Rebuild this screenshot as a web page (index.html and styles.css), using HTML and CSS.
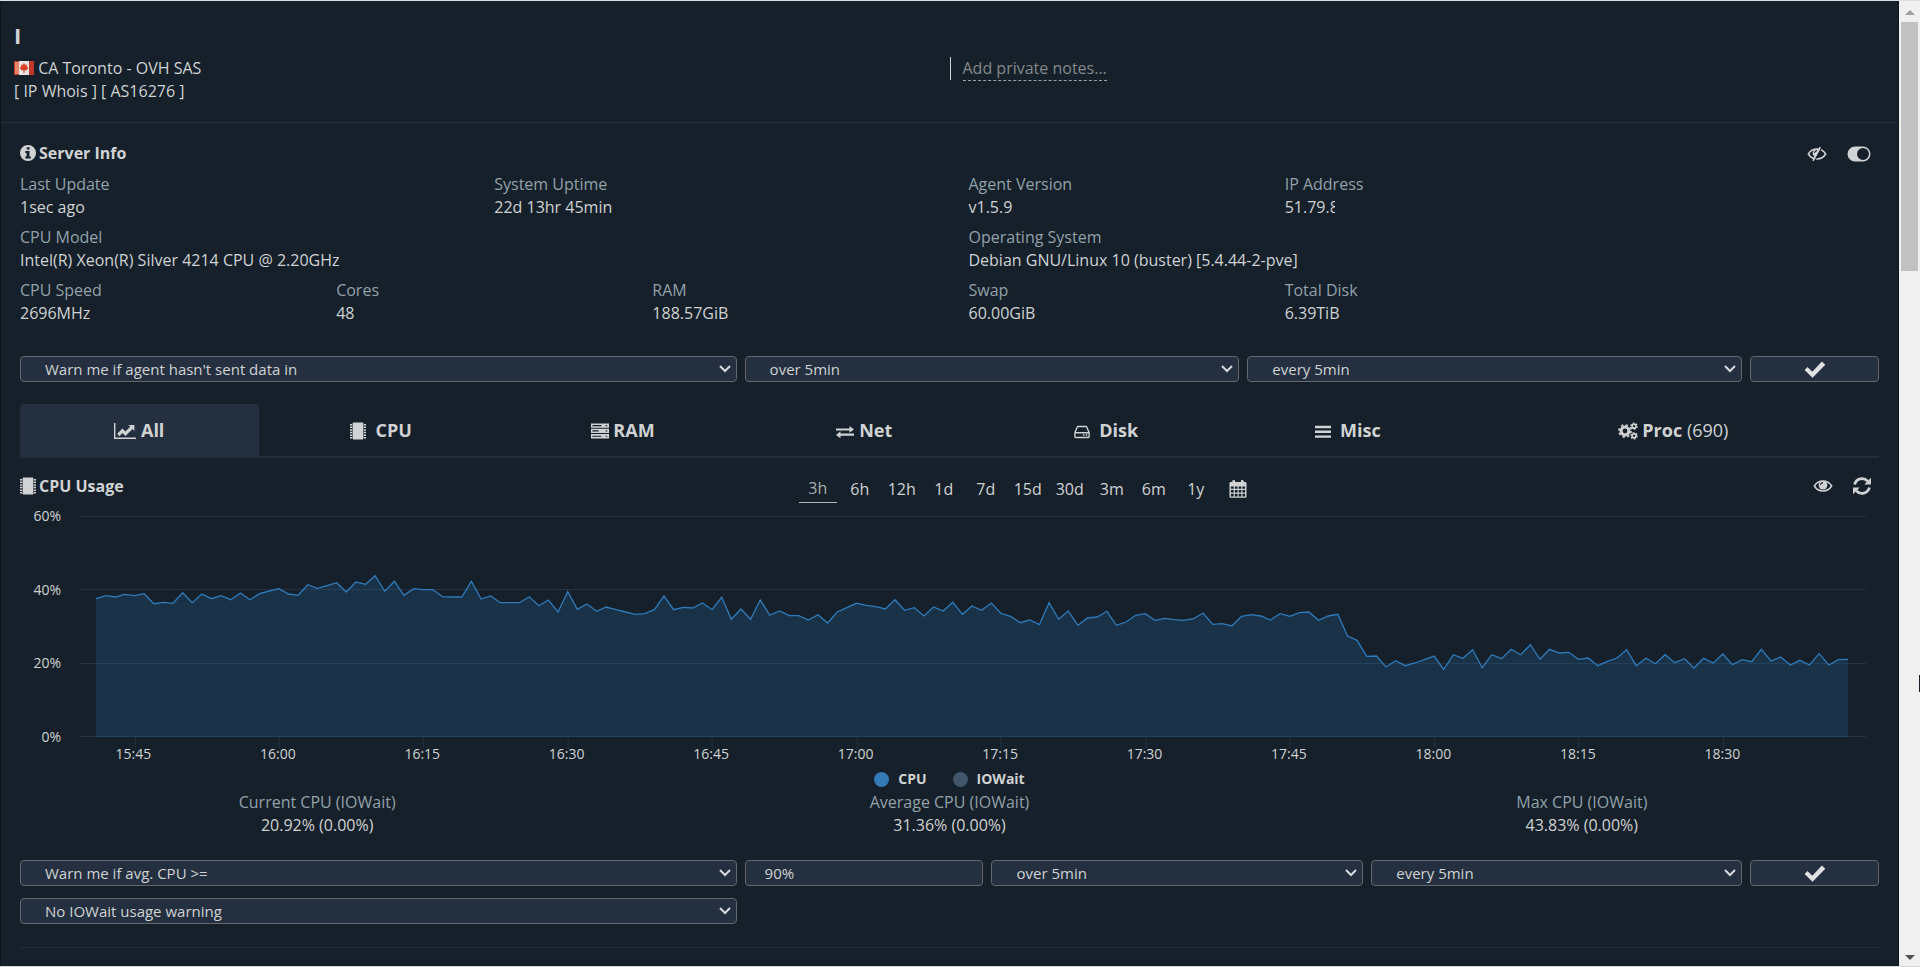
FILE: index.html
```html
<!DOCTYPE html>
<html lang="en">
<head>
<meta charset="utf-8">
<title>Server monitor</title>
<link rel="stylesheet" href="styles.css">
</head>
<body>
<svg class="defs" aria-hidden="true">
  <symbol id="i-info" viewBox="0 0 16 16"><path fill-rule="evenodd" d="M8 0a8 8 0 1 0 0 16A8 8 0 0 0 8 0zM6.7 2.2h2.8v2.4H6.7zM5.3 6h4.2v5.4h1.3v2H5.3v-2h1.3V8H5.3z"/></symbol>
  <symbol id="i-eye" viewBox="0 0 22 16"><path class="line" d="M1.5 8C6 .7 16 .7 20.500 8 16 15.300 6 15.300 1.500 8z"/><circle cx="11" cy="7" r="4.800"/><path class="cut" d="M8.300 7a2.700 2.700 0 0 1 2.700-2.700"/></symbol>
  <symbol id="i-eyeoff" viewBox="0 0 22 16"><path class="line" d="M1.500 8C6 .7 16 .7 20.500 8 16 15.300 6 15.300 1.500 8z"/><path d="M6.200 6.500a4.900 4.900 0 0 1 8-3L9.500 11.500a5 5 0 0 1-3.300-5z"/><path class="cut" d="M8.300 7a2.700 2.700 0 0 1 2.700-2.700M16.300.8 8.300 16"/><path class="line" d="M14.700.3 6.600 15.600"/></symbol>
  <symbol id="i-toggle" viewBox="0 0 24 16"><path fill-rule="evenodd" d="M8 .5h8a7.500 7.500 0 0 1 0 15H8a7.500 7.500 0 0 1 0-15zM16 2a6 6 0 1 0 0 12 6 6 0 0 0 0-12z"/></symbol>
  <symbol id="i-check" viewBox="0 0 22 17"><path d="M.6 9.100 3.500 6.100 8.300 10.700 17.900.5 21.300 3.700 8.500 16.700z"/></symbol>
  <symbol id="i-chart" viewBox="0 0 22 16"><path d="M0 0h1.400v14.500H22V16H0z"/><path d="M3.200 10.800 8.500 5.400l3 3 4.700-4.700-1.800-1.800h6v6l-1.900-1.900-7 7-3-3-3.200 3.200z"/></symbol>
  <symbol id="i-chip" viewBox="0 0 16 17"><path d="M3.200 0h9.600L13.300.6v15.800l-.5.6H3.200l-.5-.6V.6zM0 1.500h2.200v1.500H0zm0 2.600h2.200v1.500H0zm0 2.600h2.200v1.500H0zm0 2.600h2.200v1.500H0zm0 2.600h2.200v1.500H0zm0 2.600h2.200V16H0zM13.800 1.500H16v1.500h-2.200zm0 2.600H16v1.500h-2.200zm0 2.600H16v1.500h-2.200zm0 2.600H16v1.500h-2.200zm0 2.600H16v1.500h-2.200zm0 2.600H16V16h-2.200z"/></symbol>
  <symbol id="i-server" viewBox="0 0 19 16"><path fill-rule="evenodd" d="M0 0h19v4.600H0zM1.500 1.600v1.300H11V1.600zM15.500 1.600v1.300h1.600V1.600zM0 5.600h19v4.600H0zM1.500 7.200v1.300H8V7.200zM15.500 7.200v1.300h1.600V7.200zM0 11.200h19v4.600H0zM1.500 12.900v1.300H11v-1.300zM15.500 12.900v1.300h1.600v-1.300z"/></symbol>
  <symbol id="i-swap" viewBox="0 0 20 14"><path d="M0 3h15V.2L20 4.200l-5 3.500V5.300H0zM20 8.800H5V6.300L0 10.200 5 14v-2.800h15z"/></symbol>
  <symbol id="i-disk" viewBox="0 0 18 14"><path fill="none" stroke="currentColor" stroke-width="1.500" d="M1 7.800 3.600 1.400Q3.800.8 4.500.8h9q.7 0 .9.600L17 7.800v4.600q0 .8-.8.8H1.800q-.8 0-.8-.8zH17"/><path d="M10 9.600h1.800v1.700H10zm3.200 0H15v1.700h-1.800z"/></symbol>
  <symbol id="i-bars" viewBox="0 0 18 14"><path d="M0 0h18v2.800H0zM0 5.400h18v2.800H0zM0 10.800h18v2.800H0z"/></symbol>
  <symbol id="i-cogs" viewBox="0 0 20 18"><g fill="none" stroke="currentColor"><circle cx="7" cy="9" r="3.900" stroke-width="3"/><circle cx="7" cy="9" r="6" stroke-width="1.800" stroke-dasharray="2.350 2.350"/><circle cx="16" cy="4.200" r="2" stroke-width="1.700"/><circle cx="16" cy="4.200" r="3.200" stroke-width="1.200" stroke-dasharray="1.700 1.650"/><circle cx="16" cy="13.800" r="2" stroke-width="1.700"/><circle cx="16" cy="13.800" r="3.200" stroke-width="1.200" stroke-dasharray="1.700 1.650"/></g></symbol>
  <symbol id="i-calendar" viewBox="0 0 18 19"><path fill-rule="evenodd" d="M3 2.200V1q0-1 1.400-1T6 1v1.200h6V1q0-1 1.500-1T15 1v1.200h2.200l.8.8v15l-.8.800H.8L0 18V3l.8-.8zM1.500 6.800v2.500h3V6.800zm4.200 0v2.500h2.800V6.800zm4 0v2.500h2.800V6.800zm4 0v2.500h2.800V6.800zM1.500 10.500v2.800h3v-2.800zm4.200 0v2.800h2.800v-2.800zm4 0v2.800h2.800v-2.800zm4 0v2.800h2.800v-2.800zM1.500 14.500v2.800h3v-2.800zm4.200 0v2.800h2.800v-2.800zm4 0v2.800h2.800v-2.800zm4 0v2.800h2.800v-2.800z"/></symbol>
  <symbol id="i-refresh" viewBox="0 0 18 18"><path fill="none" stroke="currentColor" stroke-width="2.800" d="M1.600 7.500C3.200 1.300 10.500-.2 14.800 4.300M16.400 10.500C14.800 16.700 7.500 18.200 3.200 13.700"/><path d="M18 .8v6.700h-6.700zM0 17.200v-6.700h6.700z"/></symbol>
</svg>
<div class="window">
  <main class="panel">
    <header class="head">
      <h1 class="title">I</h1>
      <div class="head-cols">
        <div>
          <p class="place"><svg class="flag" viewBox="0 0 20 14" role="img" aria-label="Canada"><path fill="#e8e4e0" d="M0 0h20v14H0z"/><path fill="#c0392b" d="M0 0h5v14H0zM15 0h5v14h-5z"/><path fill="#e8826a" d="M1 1h4v12H1z"/><path fill="#d9432e" d="m10 2 1.300 2 1.700-.6-.3 2L14.500 7l-2 2.200-2 .2V12h-1V9.400l-2-.2-2-2.200 1.800-1.600-.3-2 1.700.6z"/></svg> CA Toronto - OVH SAS</p>
          <p><a href="#whois">[ IP Whois ]</a> <a href="#as">[ AS16276 ]</a></p>
        </div>
        <div class="notes"><a class="note" href="#notes">Add private notes...</a></div>
      </div>
    </header>

    <section class="section">
      <div class="bar">
        <h2><svg class="w16"><use href="#i-info"/></svg>Server Info</h2>
        <div class="tools">
          <button class="icon" aria-label="Hide"><svg class="w20"><use href="#i-eyeoff"/></svg></button>
          <button class="icon" aria-label="Toggle"><svg class="w24"><use href="#i-toggle"/></svg></button>
        </div>
      </div>
      <dl class="info">
        <div class="s3"><dt>Last Update</dt><dd>1sec ago</dd></div>
        <div class="s3"><dt>System Uptime</dt><dd>22d 13hr 45min</dd></div>
        <div class="s2"><dt>Agent Version</dt><dd>v1.5.9</dd></div>
        <div class="s4"><dt>IP Address</dt><dd class="masked">51.79.8</dd></div>
        <div class="s6"><dt>CPU Model</dt><dd>Intel(R) Xeon(R) Silver 4214 CPU @ 2.20GHz</dd></div>
        <div class="s6"><dt>Operating System</dt><dd>Debian GNU/Linux 10 (buster) [5.4.44-2-pve]</dd></div>
        <div class="s2"><dt>CPU Speed</dt><dd>2696MHz</dd></div>
        <div class="s2"><dt>Cores</dt><dd>48</dd></div>
        <div class="s2"><dt>RAM</dt><dd>188.57GiB</dd></div>
        <div class="s2"><dt>Swap</dt><dd>60.00GiB</dd></div>
        <div class="s2"><dt>Total Disk</dt><dd>6.39TiB</dd></div>
      </dl>
      <form class="alert agent">
        <select aria-label="Agent warning"><option>Warn me if agent hasn't sent data in</option></select>
        <select aria-label="Agent period"><option>over 5min</option></select>
        <select aria-label="Agent repeat"><option>every 5min</option></select>
        <button type="button" aria-label="Save"><svg class="w22"><use href="#i-check"/></svg></button>
      </form>
    </section>

    <nav class="tabs">
      <a class="tab on" href="#all"><svg class="w22"><use href="#i-chart"/></svg> All</a>
      <a class="tab" href="#cpu"><svg class="w16"><use href="#i-chip"/></svg>&nbsp; CPU</a>
      <a class="tab" href="#ram"><svg class="w18"><use href="#i-server"/></svg> RAM</a>
      <a class="tab" href="#net"><svg class="w18 low"><use href="#i-swap"/></svg> Net</a>
      <a class="tab" href="#disk"><svg class="w16 low"><use href="#i-disk"/></svg>&nbsp; Disk</a>
      <a class="tab" href="#misc"><svg class="w16 low"><use href="#i-bars"/></svg>&nbsp; Misc</a>
      <a class="tab" href="#proc"><svg class="w20"><use href="#i-cogs"/></svg> Proc <span>(690)</span></a>
    </nav>

    <section class="section usage">
      <div class="bar three">
        <h2><svg class="w16"><use href="#i-chip"/></svg>CPU Usage</h2>
        <div class="ranges">
          <button class="on">3h</button><button>6h</button><button>12h</button><button>1d</button><button>7d</button><button>15d</button><button>30d</button><button>3m</button><button>6m</button><button>1y</button><button aria-label="Pick dates"><svg class="w18"><use href="#i-calendar"/></svg></button>
        </div>
        <div class="tools">
          <button class="icon" aria-label="Show"><svg class="w20"><use href="#i-eye"/></svg></button>
          <button class="icon" aria-label="Refresh"><svg class="w18"><use href="#i-refresh"/></svg></button>
        </div>
      </div>
      <div class="chart">
        <div class="yaxis"><span>60%</span><span>40%</span><span>20%</span><span>0%</span></div>
        <div class="plot">
          <svg class="graph" viewBox="0 0 1788 232" preserveAspectRatio="none" role="img" aria-label="CPU usage over three hours">
            <path class="grid" d="M0 .5H1788M0 73.500H1788M0 147.500H1788M0 220.500H1788"/>
            <path class="grid" id="ticks"/>
            <path class="area" id="area"/>
            <path class="trace" id="trace"/>
          </svg>
          <div class="xaxis"><span>15:45</span><span>16:00</span><span>16:15</span><span>16:30</span><span>16:45</span><span>17:00</span><span>17:15</span><span>17:30</span><span>17:45</span><span>18:00</span><span>18:15</span><span>18:30</span></div>
        </div>
      </div>
      <div class="legend"><span class="key cpu">CPU</span><span class="key wait">IOWait</span></div>
      <dl class="stats">
        <div><dt>Current CPU (IOWait)</dt><dd>20.92% (0.00%)</dd></div>
        <div><dt>Average CPU (IOWait)</dt><dd>31.36% (0.00%)</dd></div>
        <div><dt>Max CPU (IOWait)</dt><dd>43.83% (0.00%)</dd></div>
      </dl>
      <form class="alert load">
        <select aria-label="CPU warning"><option>Warn me if avg. CPU &gt;=</option></select>
        <input type="text" aria-label="CPU threshold" value="90%">
        <select aria-label="CPU period"><option>over 5min</option></select>
        <select aria-label="CPU repeat"><option>every 5min</option></select>
        <button type="button" aria-label="Save"><svg class="w22"><use href="#i-check"/></svg></button>
        <select aria-label="IOWait warning"><option>No IOWait usage warning</option></select>
      </form>
      <hr>
    </section>
  </main>
  <div class="scroll" aria-hidden="true">
    <i class="up"></i><i class="thumb"></i><i class="down"></i><i class="pointer"></i>
  </div>
</div>
<script src="chart.js"></script>
</body>
</html>
```
FILE: chart.js
```js
// One sample per minute, as depth below the 60% line; 661 is 0%.
const samples = [
  248,239,243,235,239,233,263,259,262,230,260,234,248,239,251,231,251,233,225,218,
  234,238,206,217,209,200,228,198,205,179,226,196,238,218,221,221,242,243,243,196,
  249,240,260,260,260,242,269,252,288,227,280,264,286,273,281,288,295,293,281,240,
  281,274,276,261,281,244,310,279,310,252,298,285,299,299,312,296,321,288,275,262,
  268,272,279,251,283,275,300,273,285,259,295,270,283,261,292,301,320,312,326,260,
  310,285,328,306,303,286,328,318,298,293,313,307,311,313,308,291,325,323,330,301,
  296,300,312,293,301,290,288,313,300,295,360,373,421,420,453,434,449,441,431,420,
  460,416,427,401,455,416,428,400,416,386,430,400,411,409,430,426,449,436,426,401,
  449,427,443,416,440,428,456,427,441,414,446,431,437,400,435,423,447,433,447,413,
  447,431,430
];
const step = 9.632;
const points = samples.map((v, i) => `${(17 + i * step).toFixed(1)} ${(v / 3).toFixed(1)}`);
const end = (17 + (samples.length - 1) * step).toFixed(1);
document.getElementById('trace').setAttribute('d', 'M' + points.join('L'));
document.getElementById('area').setAttribute('d', `M17 221L${points.join('L')}L${end} 221Z`);
let ticks = '';
for (let m = 4; m < 180; m += 15) ticks += `M${Math.round(17 + m * step) + 0.5} 221V232`;
document.getElementById('ticks').setAttribute('d', ticks);
```
FILE: styles.css
```css
* { box-sizing: border-box; }
body { margin: 0; background: #15202a; color: #d0d2d3; font: 16px/23px "Open Sans", "Noto Sans", sans-serif; }
h1, h2, p, dl, dd { margin: 0; }
a { color: inherit; text-decoration: none; }
button { font: inherit; color: inherit; background: none; border: 0; padding: 0; }
svg { fill: currentColor; }
.defs { position: absolute; width: 0; height: 0; }
.line { fill: none; stroke: currentColor; stroke-width: 1.700; }
.cut { fill: none; stroke: #15202a; stroke-width: 1.200; }
.w16, .w18, .w20, .w22, .w24 { height: 18px; vertical-align: -3px; }
.w16 { width: 16px; }
.w18 { width: 18px; }
.w20 { width: 20px; }
.w22 { width: 22px; }
.w24 { width: 24px; }
.low { height: 16px; }

.window { display: flex; min-height: 100vh; border-top: 1px solid #dde0e0; border-bottom: 1px solid #d8d6dc; }
.panel { flex: 1; border: solid #0d141a; border-width: 0 1px; border-radius: 4px 4px 0 0; }
.scroll { position: relative; display: flex; flex-direction: column; width: 21px; padding: 9px 2px 6px; background: #f0f0f0; }
.up, .down { align-self: center; border: solid transparent; border-width: 0 5px; }
.up { border-bottom: 5px solid #9da19d; }
.down { margin-top: auto; border-top: 5px solid #505050; }
.thumb { width: 17px; height: 249px; margin-top: 7px; background: #c1c1c1; }
.pointer { position: absolute; right: 0; top: 674px; width: 1px; height: 17px; background: #15202a; }

.head { padding: 19px 13px 0; height: 122px; border-bottom: 1px solid #243040; }
.title { font-size: 22px; line-height: 30px; }
.head-cols { display: grid; grid-template-columns: 1fr 1fr; padding-top: 7px; }
.flag { width: 20px; height: 14px; vertical-align: -1px; }
.notes { height: 23px; padding-left: 12px; border-left: 1px solid #d0d2d3; }
.note { display: inline-block; height: 24px; color: #84888a; border-bottom: 1px dashed #a0a2a2; }

.bar { display: flex; justify-content: space-between; align-items: center; padding: 0 27px 0 19px; height: 23px; }
.bar.three { display: grid; grid-template-columns: 781fr auto 616fr; align-items: start; }
h2 { font-size: 16px; line-height: 23px; }
h2 svg { margin-right: 3px; }
.tools { display: flex; justify-content: flex-end; gap: 20px; }
.three .tools { padding-top: 2px; }
.icon { display: flex; }
.section { padding-top: 19px; }
.info { display: grid; grid-template-columns: repeat(12, 1fr); row-gap: 7px; padding-top: 8px; }
.info > div { padding-left: 19px; }
.s2 { grid-column: span 2; }
.s3 { grid-column: span 3; }
.s4 { grid-column: span 4; }
.s6 { grid-column: span 6; }
dt { color: #93a1a9; }
.masked { width: 50px; overflow: hidden; }

.alert { display: grid; gap: 12px 8px; margin: 31px 19px 0; }
.agent { grid-template-columns: 717fr 495fr 495fr 129fr; }
.load { grid-template-columns: 717fr 239fr 372fr 371fr 129fr; }
.alert > * { width: 100%; height: 26px; font: 15px/22px "Open Sans", "Noto Sans", sans-serif; color: #d0d2d3; background-color: #243040; border: 1px solid #66676a; border-radius: 4px; margin: 0; }
.alert select { appearance: none; padding: 0 24px; background-image: url("data:image/svg+xml,%3Csvg xmlns='http://www.w3.org/2000/svg' width='12' height='8'%3E%3Cpath d='M1 1l5 5 5-5' fill='none' stroke='%23d8dadb' stroke-width='2'/%3E%3C/svg%3E"); background-repeat: no-repeat; background-position: right 5px center; }
.alert input { padding: 0 19px; }
.alert svg { color: #e0e1e1; height: 17px; }

.tabs { display: grid; grid-template-columns: repeat(6, 13fr) 22fr; margin: 22px 19px 0; border-bottom: 2px solid #212e3c; }
.tab { margin-right: 3px; height: 52px; font-size: 18px; line-height: 52px; font-weight: 700; text-align: center; border-radius: 4px 4px 0 0; }
.tab.on { background: #243040; }
.tab span { font-weight: 400; }

.usage { padding-top: 17px; }
.ranges { display: flex; gap: 4px; }
.ranges button { width: 38px; height: 28px; }
.ranges .on { color: #a9adae; border-bottom: 1px solid #b5b8b9; }
.chart { display: flex; padding: 18px 32px 0 19px; }
.yaxis { display: flex; flex-direction: column; justify-content: space-between; width: 59px; height: 241px; margin-top: -10px; padding-right: 18px; font-size: 14px; line-height: 20px; text-align: right; }
.plot { flex: 1; }
.graph { display: block; width: 100%; height: 232px; }
.grid { stroke: #233142; }
.area { fill: #2f7ebf; fill-opacity: .2; }
.trace { fill: none; stroke: #2f7bbb; stroke-width: 1.300; }
.xaxis { display: grid; grid-template-columns: repeat(12, 1fr); width: 97%; margin: -4px 0 3px -1%; font-size: 14px; line-height: 20px; text-align: center; }
.legend { display: flex; justify-content: center; gap: 26px; font-size: 14px; font-weight: 700; line-height: 24px; }
.key { display: flex; align-items: center; gap: 9px; }
.key::before { content: ""; width: 15px; height: 15px; border-radius: 50%; background: #337ab7; }
.wait::before { background: #41566b; }
.stats { display: grid; grid-template-columns: repeat(3, 1fr); text-align: center; }
.load { margin-top: 23px; }
hr { margin: 23px 19px 0; border: 0; border-top: 1px solid #212e3c; }
```
